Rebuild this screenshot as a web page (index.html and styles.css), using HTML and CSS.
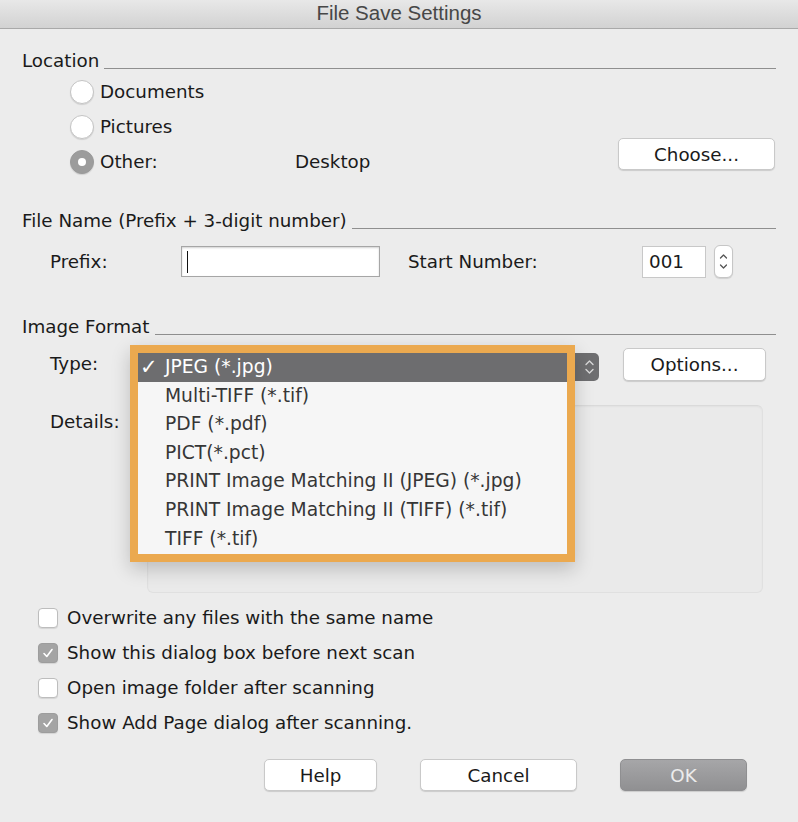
FILE: index.html
```html
<!DOCTYPE html>
<html lang="en">
<head>
<meta charset="utf-8">
<title>File Save Settings</title>
<link rel="stylesheet" href="styles.css">
</head>
<body>
<div class="titlebar"><span class="title">File Save Settings</span></div>
<main class="dialog">
  <section class="group">
    <div class="group-head"><span class="group-label">Location</span><i class="rule"></i></div>
    <div class="radios">
      <div class="radio-row"><span class="radio"></span><span>Documents</span></div>
      <div class="radio-row"><span class="radio"></span><span>Pictures</span></div>
      <div class="radio-row">
        <span class="radio on"></span><span class="other-label">Other:</span><span>Desktop</span>
        <button class="btn choose">Choose...</button>
      </div>
    </div>
  </section>

  <section class="group filename">
    <div class="group-head"><span class="group-label">File Name (Prefix + 3-digit number)</span><i class="rule"></i></div>
    <div class="prefix-row">
      <span class="field-label prefix-label">Prefix:</span>
      <span class="input prefix-input"><i class="caret"></i></span>
      <span class="start-label">Start Number:</span>
      <span class="input num-input">001</span>
      <span class="stepper">
        <svg width="19" height="33" viewBox="0 0 19 33"><path d="M6.5 13 L9.5 10 L12.5 13" fill="none" stroke="#555" stroke-width="1.3" stroke-linecap="round" stroke-linejoin="round"/><path d="M6.5 20 L9.5 23 L12.5 20" fill="none" stroke="#555" stroke-width="1.3" stroke-linecap="round" stroke-linejoin="round"/></svg>
      </span>
    </div>
  </section>

  <section class="group imageformat">
    <div class="group-head"><span class="group-label">Image Format</span><i class="rule"></i></div>
    <div class="type-row">
      <span class="field-label type-label">Type:</span>
      <span class="select">
        <span class="select-arrows">
          <svg width="19" height="28" viewBox="0 0 19 28"><path d="M6 11.5 L9.5 8 L13 11.5" fill="none" stroke="#d8d8d8" stroke-width="1.4" stroke-linecap="round" stroke-linejoin="round"/><path d="M6 16.5 L9.5 20 L13 16.5" fill="none" stroke="#d8d8d8" stroke-width="1.4" stroke-linecap="round" stroke-linejoin="round"/></svg>
        </span>
      </span>
      <button class="btn options">Options...</button>
      <div class="popup">
        <ul class="menu">
          <li class="item selected"><span class="check">✓</span>JPEG (*.jpg)</li>
          <li class="item">Multi-TIFF (*.tif)</li>
          <li class="item">PDF (*.pdf)</li>
          <li class="item">PICT(*.pct)</li>
          <li class="item">PRINT Image Matching II (JPEG) (*.jpg)</li>
          <li class="item">PRINT Image Matching II (TIFF) (*.tif)</li>
          <li class="item">TIFF (*.tif)</li>
        </ul>
      </div>
    </div>
    <div class="details-row">
      <span class="field-label details-label">Details:</span>
      <div class="details-box"></div>
    </div>
  </section>

  <section class="checks">
    <div class="check-row"><span class="checkbox"></span><span>Overwrite any files with the same name</span></div>
    <div class="check-row"><span class="checkbox on"><svg width="20" height="20" viewBox="0 0 20 20"><path d="M6 10.5 L8.8 13.5 L14 6.5" fill="none" stroke="#fff" stroke-width="1.6" stroke-linecap="round" stroke-linejoin="round"/></svg></span><span>Show this dialog box before next scan</span></div>
    <div class="check-row"><span class="checkbox"></span><span>Open image folder after scanning</span></div>
    <div class="check-row"><span class="checkbox on"><svg width="20" height="20" viewBox="0 0 20 20"><path d="M6 10.5 L8.8 13.5 L14 6.5" fill="none" stroke="#fff" stroke-width="1.6" stroke-linecap="round" stroke-linejoin="round"/></svg></span><span>Show Add Page dialog after scanning.</span></div>
  </section>

  <div class="actions">
    <button class="btn help">Help</button>
    <button class="btn cancel">Cancel</button>
    <button class="btn ok">OK</button>
  </div>
</main>
</body>
</html>
```
FILE: styles.css
```css
* { box-sizing: border-box; }
html, body { margin: 0; padding: 0; }
body {
  width: 798px;
  height: 822px;
  background: #ececec;
  font-family: "DejaVu Sans", "Liberation Sans", sans-serif;
  font-size: 18.3px;
  color: #1a1a1a;
  overflow: hidden;
}
.titlebar {
  height: 29px;
  background: linear-gradient(#e8e8e8, #d2d2d2);
  border-bottom: 1px solid #a9a9a9;
  display: flex;
  justify-content: center;
  align-items: center;
}
.title {
  font-family: "Liberation Sans", sans-serif;
  font-size: 20.5px;
  color: #474747;
  margin-top: -2px;
}
.dialog {
  padding: 0 22px;
}
.group-head {
  display: flex;
  height: 22px;
  line-height: 22px;
  margin-top: 21px;
}
.group-label { white-space: nowrap; }
.rule {
  flex: 1;
  height: 1px;
  background: #8f8f8f;
  margin-top: 18px;
  margin-left: 5px;
}
.radios {
  margin-top: 2px;
  padding-left: 48px;
}
.radio-row {
  display: flex;
  align-items: center;
  height: 35px;
}
.radio {
  width: 24px;
  height: 24px;
  border-radius: 50%;
  background: #fff;
  border: 1px solid #c4c4c4;
  box-shadow: 0 1px 1px rgba(0,0,0,0.12);
  margin-right: 6px;
  flex: none;
}
.radio.on {
  background: #9c9c9c;
  border-color: #9a9a9a;
  display: flex;
  align-items: center;
  justify-content: center;
}
.radio.on::after {
  content: "";
  width: 8px;
  height: 8px;
  border-radius: 50%;
  background: #fff;
}
.other-label { width: 195px; }
.btn {
  font-family: "DejaVu Sans", "Liberation Sans", sans-serif;
  font-size: 18.3px;
  color: #1a1a1a;
  background: #fff;
  border: 1px solid #c9c9c9;
  border-radius: 5px;
  box-shadow: 0 1px 1px rgba(0,0,0,0.14);
  height: 32px;
  padding: 0;
  display: flex;
  align-items: center;
  justify-content: center;
}
.choose {
  width: 157px;
  margin-left: auto;
  margin-right: 1px;
  align-self: flex-start;
  margin-top: -6px;
}
.filename .group-head { margin-top: 31px; }
.prefix-row {
  display: flex;
  align-items: center;
  height: 33px;
  margin-top: 13px;
  padding-left: 28px;
}
.field-label { flex: none; }
.prefix-label { width: 131px; }
.input {
  background: #fff;
  display: flex;
  align-items: center;
}
.prefix-input {
  width: 199px;
  height: 31px;
  border: 1px solid #a6a6a6;
  box-shadow: inset 0 1px 2px rgba(0,0,0,0.18);
  padding-left: 5px;
}
.caret {
  width: 1px;
  height: 22px;
  background: #111;
}
.start-label {
  margin-left: 28px;
  width: 234px;
}
.num-input {
  width: 64px;
  height: 32px;
  border: 1px solid #c8c8c8;
  padding-left: 6px;
}
.stepper {
  width: 19px;
  height: 33px;
  margin-left: 8px;
  background: #fff;
  border: 1px solid #c6c6c6;
  border-radius: 6px;
  box-shadow: 0 1px 1px rgba(0,0,0,0.12);
  display: flex;
  align-items: center;
  justify-content: center;
  overflow: hidden;
}
.stepper svg { flex: none; }
.imageformat .group-head { margin-top: 38px; }
.type-row {
  position: relative;
  display: flex;
  align-items: center;
  height: 33px;
  margin-top: 10px;
  padding-left: 28px;
}
.type-label { width: 97px; margin-top: -2px; }
.select {
  width: 452px;
  height: 28px;
  margin-top: 5px;
  background: #6e6e70;
  border-radius: 5px;
  display: flex;
  justify-content: flex-end;
}
.select-arrows {
  width: 19px;
  height: 28px;
  display: flex;
}
.options {
  width: 143px;
  height: 33px;
  margin-left: 24px;
}
.popup {
  position: absolute;
  left: 108px;
  top: -3px;
  width: 445px;
  height: 217px;
  border: 8px solid #eba94f;
  background: #f6f6f6;
  box-shadow: 0 7px 18px rgba(0,0,0,0.2);
}
.menu {
  list-style: none;
  margin: 0;
  padding: 0;
}
.item {
  height: 28.6px;
  line-height: 28.6px;
  padding-left: 27px;
  color: #363636;
  font-size: 18.7px;
  white-space: nowrap;
  position: relative;
}
.item.selected {
  background: #6d6d6f;
  color: #fff;
}
.check {
  position: absolute;
  left: 2px;
  top: 0;
  color: #fff;
  font-size: 21px;
  font-weight: bold;
}
.details-row {
  display: flex;
  margin-top: 24px;
  padding-left: 28px;
}
.details-label {
  width: 97px;
  padding-top: 6px;
  line-height: 22px;
}
.details-box {
  width: 616px;
  height: 188px;
  background: #eaeaea;
  border: 1px solid #e0e0e0;
  border-top-color: #dadada;
  border-radius: 6px;
  box-shadow: inset 0 1px 2px rgba(0,0,0,0.04);
}
.checks {
  margin-top: 7px;
  padding-left: 16px;
}
.check-row {
  display: flex;
  align-items: center;
  height: 35px;
}
.checkbox {
  width: 20px;
  height: 20px;
  border-radius: 4px;
  background: #fff;
  border: 1px solid #bdbdbd;
  box-shadow: 0 1px 1px rgba(0,0,0,0.1);
  margin-right: 9px;
  flex: none;
  display: flex;
}
.checkbox.on {
  background: #a4a4a4;
  border-color: #9d9d9d;
}
.checkbox svg { margin: -1px; }
.actions {
  display: flex;
  margin-top: 19px;
}
.help { width: 113px; margin-left: 242px; }
.cancel { width: 157px; margin-left: 43px; }
.ok {
  width: 127px;
  margin-left: 43px;
  background: linear-gradient(#a6a6a8, #909092);
  border-color: #8f8f91;
  color: #ececec;
}
```
